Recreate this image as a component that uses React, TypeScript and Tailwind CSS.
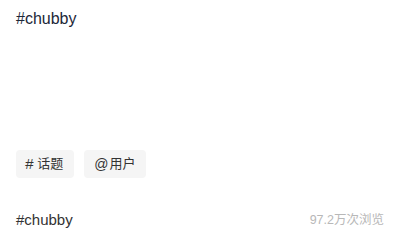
export default function App() {
  const font = { fontFamily: '"Liberation Sans", "Noto Sans CJK SC", sans-serif' };
  return (
    <div className="w-[400px] h-[245px] bg-white flex flex-col px-4" style={font}>
      <div className="pt-[9px] text-[16px] leading-[20px] text-[#1c2738]">#chubby</div>
      <div className="mt-[121px] flex gap-[10px]">
        <div className="h-[28px] pl-[9px] pr-[11px] rounded-[4px] bg-[#f5f5f5] flex items-center text-[13px] text-[#333]">
          <span className="italic text-[15px] mr-[4px]">#</span>话题
        </div>
        <div className="h-[28px] px-[10px] rounded-[4px] bg-[#f5f5f5] flex items-center text-[13px] text-[#333]">
          <span className="text-[14px] mr-[1px]">@</span>用户
        </div>
      </div>
      <div className="mt-[33px] flex items-center justify-between">
        <span className="text-[15px] leading-[18px] text-[#333]">#chubby</span>
        <span className="text-[12.5px] leading-[18px] text-[#b8b8b8]">97.2万次浏览</span>
      </div>
    </div>
  );
}
